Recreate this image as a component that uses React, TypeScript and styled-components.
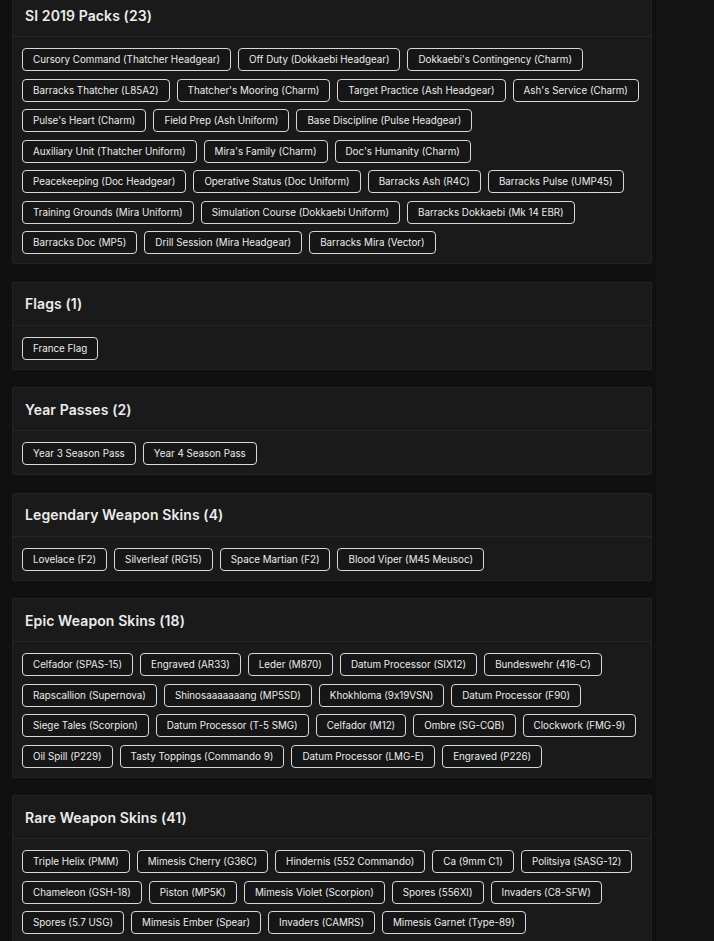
import React from "react";
import styled, { createGlobalStyle } from "styled-components";

const GlobalStyle = createGlobalStyle`
  html, body {
    margin: 0;
    padding: 0;
    background: #131313;
    font-family: Inter, "Noto Sans", "Liberation Sans", sans-serif;
    font-feature-settings: "calt" 0;
    color: #e6e6e6;
  }
  * { box-sizing: border-box; }
`;

const Page = styled.div`
  width: 656px;
  background: #101010;
  padding: 0 4px 20px 12px;
  overflow: hidden;
`;

const List = styled.div`
  display: flex;
  flex-direction: column;
  gap: 17.5px;
  margin-top: -7px;
`;

const Card = styled.section`
  width: 640px;
  background: #1a1a1a;
  border: 1px solid #242424;
  border-radius: 2px;
`;

const CardHeader = styled.header`
  height: 43px;
  display: flex;
  align-items: center;
  padding: 0 12px;
  border-bottom: 1px solid #262626;
`;

const Title = styled.h2`
  margin: 0;
  font-size: 14px;
  font-weight: 600;
  color: #ececec;
  letter-spacing: 0.1px;
`;

const TagWrap = styled.div`
  display: flex;
  flex-wrap: wrap;
  gap: 7.5px 7px;
  padding: 11px 11px 9px 9px;
`;

const Tag = styled.span`
  height: 23px;
  display: inline-flex;
  align-items: center;
  padding: 0 10px;
  border: 1px solid #d8d8d8;
  border-radius: 4px;
  background: #161616;
  font-size: 9.8px;
  color: #ececec;
  white-space: nowrap;
`;

type Group = { title: string; count: number; items: string[] };

const GROUPS: Group[] = [
  {
    title: "SI 2019 Packs",
    count: 23,
    items: [
      "Cursory Command (Thatcher Headgear)",
      "Off Duty (Dokkaebi Headgear)",
      "Dokkaebi's Contingency (Charm)",
      "Barracks Thatcher (L85A2)",
      "Thatcher's Mooring (Charm)",
      "Target Practice (Ash Headgear)",
      "Ash's Service (Charm)",
      "Pulse's Heart (Charm)",
      "Field Prep (Ash Uniform)",
      "Base Discipline (Pulse Headgear)",
      "Auxiliary Unit (Thatcher Uniform)",
      "Mira's Family (Charm)",
      "Doc's Humanity (Charm)",
      "Peacekeeping (Doc Headgear)",
      "Operative Status (Doc Uniform)",
      "Barracks Ash (R4C)",
      "Barracks Pulse (UMP45)",
      "Training Grounds (Mira Uniform)",
      "Simulation Course (Dokkaebi Uniform)",
      "Barracks Dokkaebi (Mk 14 EBR)",
      "Barracks Doc (MP5)",
      "Drill Session (Mira Headgear)",
      "Barracks Mira (Vector)",
    ],
  },
  { title: "Flags", count: 1, items: ["France Flag"] },
  { title: "Year Passes", count: 2, items: ["Year 3 Season Pass", "Year 4 Season Pass"] },
  {
    title: "Legendary Weapon Skins",
    count: 4,
    items: ["Lovelace (F2)", "Silverleaf (RG15)", "Space Martian (F2)", "Blood Viper (M45 Meusoc)"],
  },
  {
    title: "Epic Weapon Skins",
    count: 18,
    items: [
      "Celfador (SPAS-15)",
      "Engraved (AR33)",
      "Leder (M870)",
      "Datum Processor (SIX12)",
      "Bundeswehr (416-C)",
      "Rapscallion (Supernova)",
      "Shinosaaaaaaang (MP5SD)",
      "Khokhloma (9x19VSN)",
      "Datum Processor (F90)",
      "Siege Tales (Scorpion)",
      "Datum Processor (T-5 SMG)",
      "Celfador (M12)",
      "Ombre (SG-CQB)",
      "Clockwork (FMG-9)",
      "Oil Spill (P229)",
      "Tasty Toppings (Commando 9)",
      "Datum Processor (LMG-E)",
      "Engraved (P226)",
    ],
  },
  {
    title: "Rare Weapon Skins",
    count: 41,
    items: [
      "Triple Helix (PMM)",
      "Mimesis Cherry (G36C)",
      "Hindernis (552 Commando)",
      "Ca (9mm C1)",
      "Politsiya (SASG-12)",
      "Chameleon (GSH-18)",
      "Piston (MP5K)",
      "Mimesis Violet (Scorpion)",
      "Spores (556XI)",
      "Invaders (C8-SFW)",
      "Spores (5.7 USG)",
      "Mimesis Ember (Spear)",
      "Invaders (CAMRS)",
      "Mimesis Garnet (Type-89)",
      "Mimesis Cobalt (AUG A2)",
      "Invaders (PDW9)",
      "Mimesis Ivory (416-C Carbine)",
      "Spores (SMG-11)",
      "Invaders (F2)",
    ],
  },
];

function App(): JSX.Element {
  return (
    <>
      <GlobalStyle />
      <Page>
        <List>
          {GROUPS.map((group) => (
            <Card key={group.title}>
              <CardHeader>
                <Title>
                  {group.title} ({group.count})
                </Title>
              </CardHeader>
              <TagWrap>
                {group.items.map((item, index) => (
                  <Tag key={index}>{item}</Tag>
                ))}
              </TagWrap>
            </Card>
          ))}
        </List>
      </Page>
    </>
  );
}

export default App;
